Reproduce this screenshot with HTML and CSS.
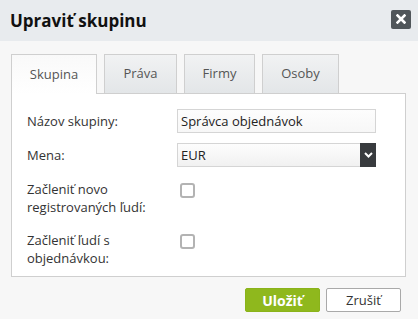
FILE: index.html
```html
<!DOCTYPE html>
<html lang="sk">
<head>
<meta charset="utf-8">
<title>Upraviť skupinu</title>
<link rel="stylesheet" href="styles.css">
</head>
<body>
<div class="dialog">
  <div class="header">
    <h1 class="title">Upraviť skupinu</h1>
    <button class="close" aria-label="Zavrieť">
      <svg width="10" height="10" viewBox="0 0 10 10"><path d="M1.5 1.5 L8.5 8.5 M8.5 1.5 L1.5 8.5" stroke="#fff" stroke-width="2.6" stroke-linecap="square"/></svg>
    </button>
  </div>
  <div class="content">
    <div class="tabs">
      <div class="tab active">Skupina</div>
      <div class="tab">Práva</div>
      <div class="tab">Firmy</div>
      <div class="tab">Osoby</div>
    </div>
    <div class="panel">
      <div class="row row-first">
        <label class="label">Názov skupiny:</label>
        <div class="input">Správca objednávok</div>
      </div>
      <div class="row row-select">
        <label class="label">Mena:</label>
        <div class="select">
          <span class="select-value">EUR</span>
          <span class="select-btn">
            <svg width="9" height="6" viewBox="0 0 9 6"><path d="M1 1 L4.5 4.5 L8 1" stroke="#fff" stroke-width="2" fill="none"/></svg>
          </span>
        </div>
      </div>
      <div class="row row-check">
        <label class="label label-wrap">Začleniť novo registrovaných ľudí:</label>
        <span class="checkbox"></span>
      </div>
      <div class="row row-check2">
        <label class="label label-wrap">Začleniť ľudí s objednávkou:</label>
        <span class="checkbox"></span>
      </div>
    </div>
    <div class="actions">
      <button class="btn btn-primary">Uložiť</button>
      <button class="btn btn-default">Zrušiť</button>
    </div>
  </div>
</div>
</body>
</html>
```

FILE: styles.css
```css
html, body {
  margin: 0;
  padding: 0;
}
body {
  background: #f7f7f7;
  font-family: "Open Sans", "Liberation Sans", sans-serif;
  color: #333;
  width: 418px;
  height: 319px;
  overflow: hidden;
}
.header {
  height: 41px;
  background: #e8ebee;
  display: flex;
  align-items: center;
  justify-content: space-between;
  padding: 0 7px 0 10px;
}
.title {
  margin: 0;
  font-size: 17px;
  font-weight: 700;
  color: #111;
  margin-top: -1px;
}
.close {
  width: 20px;
  height: 19px;
  border: 0;
  padding: 0;
  border-radius: 2px;
  background: #50565a;
  display: flex;
  align-items: center;
  justify-content: center;
  margin-top: -3px;
}
.content {
  padding: 13px 12px 0 11px;
}
.tabs {
  display: flex;
  gap: 7px;
  height: 39px;
  position: relative;
  z-index: 1;
}
.tab {
  box-sizing: border-box;
  height: 39px;
  padding: 0 18px;
  border: 1px solid #cfcfcf;
  border-bottom: 0;
  background: linear-gradient(#f1f2f3, #e3e6e8);
  font-size: 13px;
  color: #555;
  display: flex;
  align-items: center;
  justify-content: center;
  padding-bottom: 2px;
}
.tab.active {
  background: linear-gradient(#f9f9f9, #ffffff);
  height: 40px;
  width: 86px;
  border-color: #cfcfcf;
}
.tab:nth-child(2) { width: 73px; }
.tab:nth-child(3) { width: 71px; }
.tab:nth-child(4) { width: 77px; }
.panel {
  box-sizing: border-box;
  height: 184px;
  background: #fff;
  border: 1px solid #cfcfcf;
  padding: 15px 0 0 15px;
}
.row {
  display: flex;
  align-items: center;
}
.label {
  width: 150px;
  font-size: 13px;
  color: #333;
  line-height: 18px;
}
.label-wrap {
  align-self: flex-start;
}
.row-select {
  margin-top: 10px;
}
.row-check {
  margin-top: 13px;
  align-items: flex-start;
}
.row-check2 {
  margin-top: 15px;
  align-items: flex-start;
}
.input {
  box-sizing: border-box;
  width: 199px;
  height: 24px;
  border: 1px solid #d5d5d5;
  background: linear-gradient(#fdfdfd, #f7f7f7);
  font-size: 13px;
  color: #222;
  padding-left: 3px;
  display: flex;
  align-items: center;
}
.select {
  box-sizing: border-box;
  width: 199px;
  height: 24px;
  border: 1px solid #d5d5d5;
  border-right: 0;
  background: linear-gradient(#fdfdfd, #f1f1f1);
  display: flex;
  align-items: stretch;
}
.select-value {
  flex: 1;
  font-size: 13px;
  color: #222;
  padding-left: 3px;
  display: flex;
  align-items: center;
}
.select-btn {
  width: 16px;
  margin: -1px 0;
  background: #383b3e;
  display: flex;
  align-items: center;
  justify-content: center;
}
.checkbox {
  box-sizing: border-box;
  width: 15px;
  height: 15px;
  border: 2px solid #b3b3b3;
  border-radius: 3px;
  background: #fff;
  margin: 3px 0 0 3px;
}
.actions {
  display: flex;
  justify-content: flex-end;
  gap: 6px;
  margin-top: 11px;
  padding-right: 5px;
}
.btn {
  box-sizing: border-box;
  width: 75px;
  height: 24px;
  border-radius: 2px;
  font-family: "Open Sans", "Liberation Sans", sans-serif;
  padding: 0;
}
.btn-primary {
  background: #8fb81d;
  border: 1px solid #8ab31a;
  color: #fff;
  font-weight: 700;
  font-size: 14px;
}
.btn-default {
  background: #fff;
  border: 1px solid #a9a9a9;
  color: #333;
  font-size: 13px;
}
```
